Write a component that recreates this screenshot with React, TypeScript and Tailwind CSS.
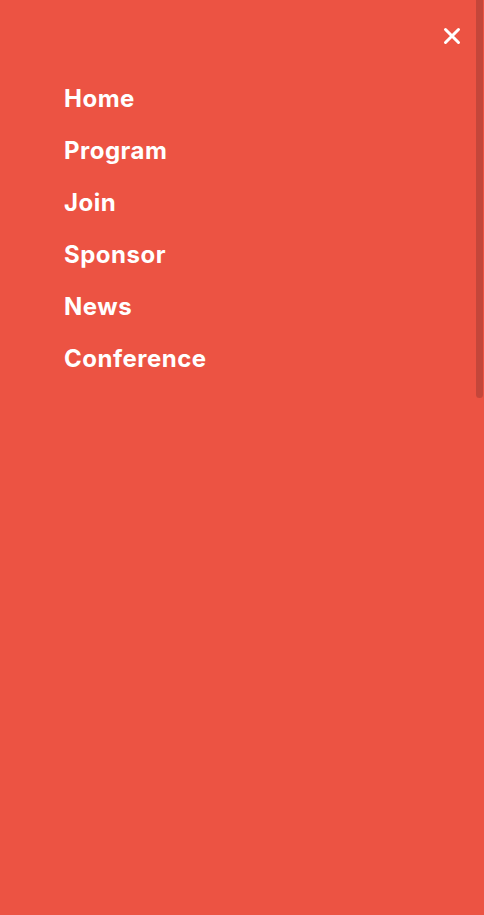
const links = ["Home", "Program", "Join", "Sponsor", "News", "Conference"];

export default function App() {
  return (
    <main className="relative min-h-[915px] w-full overflow-hidden bg-[#ec5343] font-['Inter',sans-serif] text-white">
      {/* close button */}
      <div className="flex justify-end px-[22px] pt-[26px]">
        <button aria-label="Close menu" className="flex h-[20px] w-[20px] items-center justify-center">
          <svg width="18" height="18" viewBox="0 0 18 18" fill="none">
            <path d="M2.5 2.5L15.5 15.5M15.5 2.5L2.5 15.5" stroke="white" strokeWidth="3" strokeLinecap="round" />
          </svg>
        </button>
      </div>

      {/* menu */}
      <nav className="pl-[64px] pt-[27px]">
        <ul className="flex flex-col">
          {links.map((link) => (
            <li key={link} className="text-[24px] font-bold leading-[52px] tracking-[0.5px]">
              {link}
            </li>
          ))}
        </ul>
      </nav>

      {/* scrollbar thumb */}
      <div className="absolute right-[1px] top-0 h-[398px] w-[7px] rounded-b-full bg-[#c4463a]" />
    </main>
  );
}
